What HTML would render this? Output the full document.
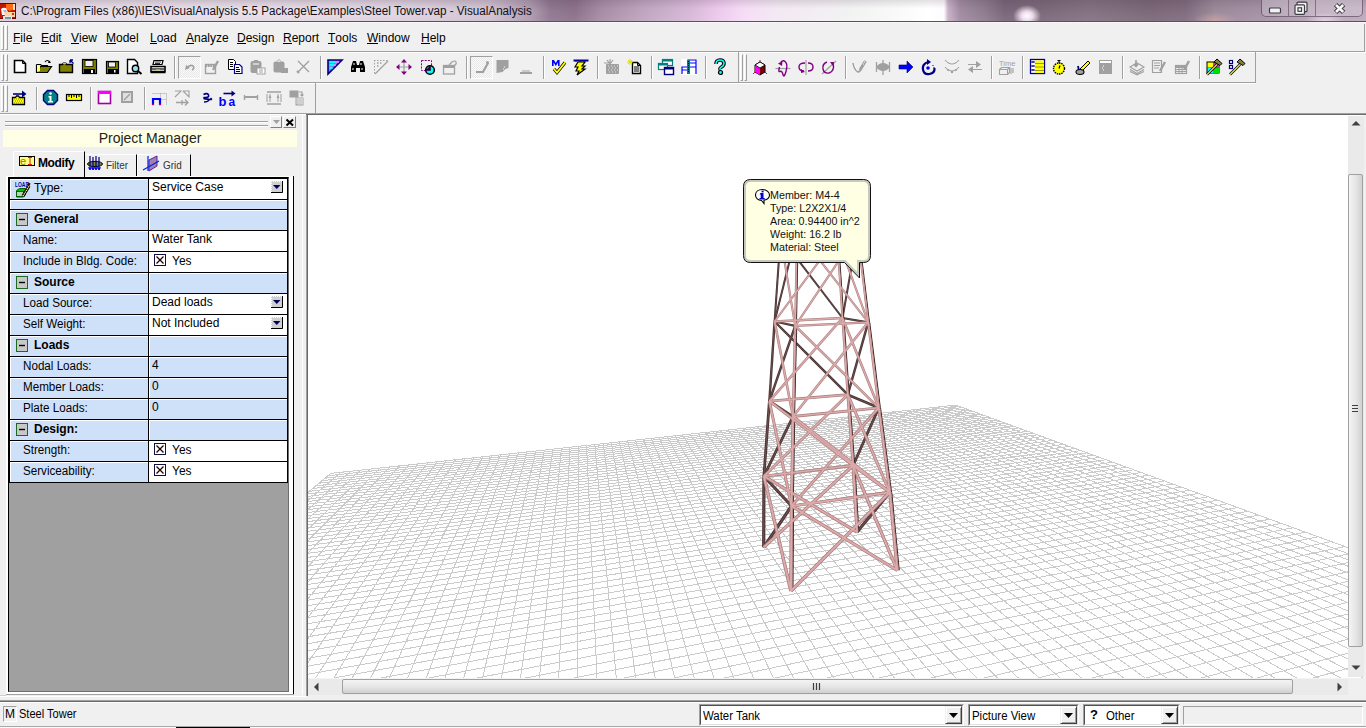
<!DOCTYPE html><html><head><meta charset="utf-8"><style>
*{margin:0;padding:0;box-sizing:border-box}
html,body{width:1366px;height:728px;overflow:hidden;background:#f0f0f0;font-family:"Liberation Sans",sans-serif;font-size:12px;color:#000;position:relative}
.a{position:absolute}
.t{white-space:nowrap;line-height:14px}
.menu u{text-decoration:none;position:relative}
.menu u:after{content:"";position:absolute;left:0;right:0;bottom:1px;height:1px;background:#000}
svg{position:absolute;overflow:visible}
</style></head><body>
<div class="a" style="left:0;top:0;width:1366px;height:21px;overflow:hidden;background:linear-gradient(90deg,#dccfdc 0px,#e2d8e2 100px,#ded2de 250px,#d8cad8 400px,#ccbccc 490px,#ac98ac 530px,#8e7690 550px,#8a7088 575px,#a48aa4 600px,#bca2bc 640px,#d6b8d6 690px,#eccaec 720px,#f6dcf6 745px,#f2e8f2 775px,#f2f2f2 850px,#ffffff 930px,#fdfbfd 944px,#c8b0c8 948px,#a08aa0 960px,#8c7a8c 985px,#786478 1005px,#7a6878 1045px,#827080 1090px,#7a6676 1150px,#7e6a7c 1185px,#9a8898 1215px,#a490a4 1262px,#b4a0b4 1310px,#bca8bc 1366px)">
<div class="a" style="left:0;top:0;width:1366px;height:21px;background:linear-gradient(180deg,rgba(60,40,60,.14) 0,rgba(255,255,255,0) 40%,rgba(255,255,255,.08) 100%)"></div>
<div class="a" style="left:0;top:0;width:560px;height:21px;background:radial-gradient(ellipse 290px 13px at 276px 12px,rgba(255,255,255,.35),rgba(255,255,255,0))"></div>
<div class="a" style="left:1010px;top:2px;width:34px;height:22px;background:radial-gradient(ellipse 14px 11px at 17px 14px,rgba(255,255,255,1) 0,rgba(255,240,255,.85) 40%,rgba(255,255,255,0) 100%)"></div>
<div class="a" style="left:1190px;top:8px;width:50px;height:14px;background:radial-gradient(ellipse 22px 8px at 25px 12px,rgba(220,170,170,.55),rgba(255,255,255,0))"></div>
<div class="a" style="left:1300px;top:8px;width:50px;height:14px;background:radial-gradient(ellipse 20px 9px at 25px 13px,rgba(255,240,255,.6),rgba(255,255,255,0))"></div>
</div>
<svg style="left:0px;top:3px" width="16" height="16"><rect width="16" height="16" fill="#7a0000"/><rect x="0" y="1" width="15" height="14" fill="#c01800"/><path d="M6 1h7l1 5-4 2-4-2z" fill="#ff6a10"/><path d="M13 1h2v6h-2z" fill="#ffe0d0"/><path d="M1 6q2-2 5-1l2 4-2 3H2z" fill="#f8f8ff"/><path d="M3 7h3l1 2H4z" fill="#a0b8e0"/><path d="M4 9h11v5H5z" fill="#ffd4a8"/><path d="M3 13h9v3H3z" fill="#e8e8e8"/><path d="M5 14h6v2H5z" fill="#8090a0"/><path d="M12 10h2v2h-2z" fill="#c04000"/></svg>
<div class="a t" style="left:21px;top:4px;font-size:12.5px;transform:scaleX(0.933);transform-origin:0 0;color:#101018">C:\Program Files (x86)\IES\VisualAnalysis 5.5 Package\Examples\Steel Tower.vap - VisualAnalysis</div>
<div class="a" style="left:1261px;top:-2px;width:102px;height:19px;border:1px solid rgba(70,50,70,.6);border-top:none;border-radius:0 0 5px 5px;background:linear-gradient(180deg,rgba(255,255,255,.28),rgba(255,255,255,.18))"></div>
<div class="a" style="left:1288px;top:0;width:1px;height:16px;background:rgba(70,50,70,.5)"></div>
<div class="a" style="left:1315px;top:0;width:1px;height:16px;background:rgba(70,50,70,.5)"></div>
<svg style="left:1268px;top:7px" width="14" height="7"><rect x="1.5" y="1" width="11" height="5" rx="1" fill="#f2f2f2" stroke="#3c3c44" stroke-width="1.2"/></svg>
<svg style="left:1294px;top:1px" width="15" height="14"><rect x="3" y="1.2" width="10" height="9.5" rx="1" fill="#f0f0f0" stroke="#3c3c44" stroke-width="1.2"/><rect x="1" y="3.8" width="9.5" height="9.5" rx="1" fill="#f4f4f4" stroke="#3c3c44" stroke-width="1.2"/><rect x="4" y="6.8" width="3.5" height="3.5" fill="#fff" stroke="#3c3c44" stroke-width="1.2"/></svg>
<svg style="left:1333px;top:3px" width="14" height="11"><path d="M2.6 1.6L10.6 9.4M10.6 1.6L2.6 9.4" stroke="#3c3c44" stroke-width="4.8"/><path d="M3 2L10.2 9M10.2 2L3 9" stroke="#f6f6f6" stroke-width="2.6"/></svg>
<div class="a" style="left:0px;top:21px;width:1366px;height:1px;background:#555"></div>
<div class="a" style="left:0px;top:22px;width:1366px;height:1px;background:#f8f8f8"></div>
<div class="a" style="left:1px;top:25px;width:3px;height:25px;border-left:1px solid #fff;border-top:1px solid #fff;border-right:1px solid #a0a0a0;border-bottom:1px solid #a0a0a0"></div>
<div class="a" style="left:5px;top:25px;width:3px;height:25px;border-left:1px solid #fff;border-top:1px solid #fff;border-right:1px solid #a0a0a0;border-bottom:1px solid #a0a0a0"></div>
<div class="a t menu" style="left:13px;top:31px"><u>F</u>ile</div>
<div class="a t menu" style="left:41px;top:31px"><u>E</u>dit</div>
<div class="a t menu" style="left:71px;top:31px"><u>V</u>iew</div>
<div class="a t menu" style="left:106px;top:31px"><u>M</u>odel</div>
<div class="a t menu" style="left:150px;top:31px"><u>L</u>oad</div>
<div class="a t menu" style="left:186px;top:31px"><u>A</u>nalyze</div>
<div class="a t menu" style="left:237px;top:31px"><u>D</u>esign</div>
<div class="a t menu" style="left:283px;top:31px"><u>R</u>eport</div>
<div class="a t menu" style="left:328px;top:31px"><u>T</u>ools</div>
<div class="a t menu" style="left:367px;top:31px"><u>W</u>indow</div>
<div class="a t menu" style="left:421px;top:31px"><u>H</u>elp</div>
<div class="a" style="left:0px;top:51px;width:1365px;height:1px;background:#a0a0a0"></div>
<div class="a" style="left:1364px;top:24px;width:1px;height:28px;background:#a0a0a0"></div>
<div class="a" style="left:0px;top:52px;width:1366px;height:1px;background:#fff"></div>
<div class="a" style="left:0px;top:82px;width:1256px;height:1px;background:#a0a0a0"></div>
<div class="a" style="left:0px;top:83px;width:1256px;height:1px;background:#fff"></div>
<div class="a" style="left:1255px;top:52px;width:1px;height:31px;background:#a0a0a0"></div>
<div class="a" style="left:738px;top:52px;width:1px;height:31px;background:#a0a0a0"></div>
<div class="a" style="left:315px;top:83px;width:1px;height:31px;background:#a0a0a0"></div>
<div class="a" style="left:0px;top:113px;width:1366px;height:1px;background:#a0a0a0"></div>
<div class="a" style="left:0px;top:114px;width:1366px;height:1px;background:#fff"></div>
<div class="a" style="left:1px;top:54px;width:3px;height:27px;border-left:1px solid #fff;border-top:1px solid #fff;border-right:1px solid #a0a0a0;border-bottom:1px solid #a0a0a0"></div>
<div class="a" style="left:5px;top:54px;width:3px;height:27px;border-left:1px solid #fff;border-top:1px solid #fff;border-right:1px solid #a0a0a0;border-bottom:1px solid #a0a0a0"></div>
<div class="a" style="left:740px;top:54px;width:3px;height:27px;border-left:1px solid #fff;border-top:1px solid #fff;border-right:1px solid #a0a0a0;border-bottom:1px solid #a0a0a0"></div>
<div class="a" style="left:744px;top:54px;width:3px;height:27px;border-left:1px solid #fff;border-top:1px solid #fff;border-right:1px solid #a0a0a0;border-bottom:1px solid #a0a0a0"></div>
<div class="a" style="left:1px;top:85px;width:3px;height:27px;border-left:1px solid #fff;border-top:1px solid #fff;border-right:1px solid #a0a0a0;border-bottom:1px solid #a0a0a0"></div>
<div class="a" style="left:5px;top:85px;width:3px;height:27px;border-left:1px solid #fff;border-top:1px solid #fff;border-right:1px solid #a0a0a0;border-bottom:1px solid #a0a0a0"></div>
<div class="a" style="left:174px;top:56px;width:1px;height:23px;background:#a0a0a0"></div>
<div class="a" style="left:175px;top:56px;width:1px;height:23px;background:#fff"></div>
<div class="a" style="left:320px;top:56px;width:1px;height:23px;background:#a0a0a0"></div>
<div class="a" style="left:321px;top:56px;width:1px;height:23px;background:#fff"></div>
<div class="a" style="left:466px;top:56px;width:1px;height:23px;background:#a0a0a0"></div>
<div class="a" style="left:467px;top:56px;width:1px;height:23px;background:#fff"></div>
<div class="a" style="left:543px;top:56px;width:1px;height:23px;background:#a0a0a0"></div>
<div class="a" style="left:544px;top:56px;width:1px;height:23px;background:#fff"></div>
<div class="a" style="left:597px;top:56px;width:1px;height:23px;background:#a0a0a0"></div>
<div class="a" style="left:598px;top:56px;width:1px;height:23px;background:#fff"></div>
<div class="a" style="left:651px;top:56px;width:1px;height:23px;background:#a0a0a0"></div>
<div class="a" style="left:652px;top:56px;width:1px;height:23px;background:#fff"></div>
<div class="a" style="left:705px;top:56px;width:1px;height:23px;background:#a0a0a0"></div>
<div class="a" style="left:706px;top:56px;width:1px;height:23px;background:#fff"></div>
<div class="a" style="left:845px;top:56px;width:1px;height:23px;background:#a0a0a0"></div>
<div class="a" style="left:846px;top:56px;width:1px;height:23px;background:#fff"></div>
<div class="a" style="left:991px;top:56px;width:1px;height:23px;background:#a0a0a0"></div>
<div class="a" style="left:992px;top:56px;width:1px;height:23px;background:#fff"></div>
<div class="a" style="left:1022px;top:56px;width:1px;height:23px;background:#a0a0a0"></div>
<div class="a" style="left:1023px;top:56px;width:1px;height:23px;background:#fff"></div>
<div class="a" style="left:1122px;top:56px;width:1px;height:23px;background:#a0a0a0"></div>
<div class="a" style="left:1123px;top:56px;width:1px;height:23px;background:#fff"></div>
<div class="a" style="left:1199px;top:56px;width:1px;height:23px;background:#a0a0a0"></div>
<div class="a" style="left:1200px;top:56px;width:1px;height:23px;background:#fff"></div>
<div class="a" style="left:36px;top:87px;width:1px;height:23px;background:#a0a0a0"></div>
<div class="a" style="left:37px;top:87px;width:1px;height:23px;background:#fff"></div>
<div class="a" style="left:90px;top:87px;width:1px;height:23px;background:#a0a0a0"></div>
<div class="a" style="left:91px;top:87px;width:1px;height:23px;background:#fff"></div>
<div class="a" style="left:144px;top:87px;width:1px;height:23px;background:#a0a0a0"></div>
<div class="a" style="left:145px;top:87px;width:1px;height:23px;background:#fff"></div>
<div class="a" style="left:178px;top:56px;width:23px;height:23px;border:1px solid #a0a0a0;border-right-color:#fff;border-bottom-color:#fff;background:repeating-conic-gradient(#fafafa 0 25%,#e8e8e8 0 50%) 0 0/2px 2px"></div>
<div class="a" style="left:470px;top:56px;width:23px;height:23px;border:1px solid #a0a0a0;border-right-color:#fff;border-bottom-color:#fff;background:repeating-conic-gradient(#fafafa 0 25%,#e8e8e8 0 50%) 0 0/2px 2px"></div>
<svg style="left:13px;top:59px" width="16" height="16" viewBox="0 0 16 16"><path d="M1.5 1.5h8l3 3v9h-11z" fill="#fff" stroke="#000" stroke-width="1.6"/><path d="M9.5 1.5v3h3" fill="none" stroke="#000"/></svg>
<svg style="left:36px;top:59px" width="16" height="16" viewBox="0 0 16 16"><path d="M0.5 5.5h4l1 1h6v2" fill="#ffff80" stroke="#000" stroke-width="1.2"/><path d="M0.5 5.5v8h11l4-6h-11l-4 6" fill="#808000" stroke="#000" stroke-width="1.2"/><path d="M1 6h3v6l-3 1z" fill="#ffff80"/><path d="M9 3q2-3 5 0" fill="none" stroke="#000" stroke-width="1.2"/><path d="M13 1.5l2 2.5h-3z" fill="#000"/></svg>
<svg style="left:59px;top:59px" width="16" height="16" viewBox="0 0 16 16"><path d="M0.5 5.5h3l1-1.5h2l1 1.5h6v8h-13z" fill="#808000" stroke="#000" stroke-width="1.4"/><path d="M4 4.2h3" stroke="#fff"/><path d="M14.5 4.5L11 1M11 1h3M11 1v3" stroke="#000080" stroke-width="1.3" fill="none"/></svg>
<svg style="left:82px;top:59px" width="16" height="16" viewBox="0 0 16 16"><rect x="0.5" y="0.5" width="14" height="14" fill="#808000" stroke="#000" stroke-width="1.2"/><rect x="3" y="1.5" width="8" height="6" fill="#f0f0f0" stroke="#000" stroke-width="0.8"/><rect x="2" y="10" width="11" height="5" fill="#000"/><rect x="9" y="11" width="2" height="3" fill="#fff"/></svg>
<svg style="left:105px;top:59px" width="16" height="16" viewBox="0 0 16 16"><rect x="1.5" y="2.5" width="12" height="12" fill="#808000" stroke="#000" stroke-width="1.2"/><rect x="3.5" y="3" width="7" height="5" fill="#f0f0f0" stroke="#000" stroke-width="0.8"/><rect x="3" y="10" width="10" height="4.5" fill="#000"/><rect x="9" y="11" width="1.5" height="2.5" fill="#fff"/></svg>
<svg style="left:127px;top:59px" width="16" height="16" viewBox="0 0 16 16"><path d="M0.5 0.5h7l3 3v11h-10z" fill="#fff" stroke="#000" stroke-width="1.4"/><circle cx="8.5" cy="9.5" r="3.2" fill="#a0e0e8" stroke="#000" stroke-width="1.4"/><path d="M11 12l3.5 3" stroke="#000" stroke-width="2"/></svg>
<svg style="left:150px;top:59px" width="16" height="16" viewBox="0 0 16 16"><path d="M4 1.5h9l-1 4h-9z" fill="#fff" stroke="#000" stroke-width="1.2"/><path d="M5 3h6M5 4.5h5" stroke="#000" stroke-width=".8"/><path d="M1 7.5h14v5h-14z" fill="#fff" stroke="#000" stroke-width="1.6"/><path d="M2 10h12" stroke="#000" stroke-width="1.2"/><path d="M6 11h4" stroke="#e0e040" stroke-width="1"/><path d="M0.5 13.5h15" stroke="#000" stroke-width="1.5"/></svg>
<svg style="left:182px;top:59px" width="16" height="16" viewBox="0 0 16 16"><path d="M5 9q3-4 6-2q2 2-1 4" fill="none" stroke="#a0a0a0" stroke-width="1.6"/><path d="M3 11l1-5 4 3z" fill="#a0a0a0"/></svg>
<svg style="left:204px;top:59px" width="16" height="16" viewBox="0 0 16 16"><rect x="1.5" y="5.5" width="10" height="9" fill="none" stroke="#a0a0a0" stroke-width="1.4"/><path d="M1 6h11v2h-11z" fill="#a0a0a0"/><path d="M3 7h1M5.5 7h1M8 7h1" stroke="#fff"/><path d="M9 11l5-9" stroke="#a0a0a0" stroke-width="2.4"/></svg>
<svg style="left:228px;top:59px" width="16" height="16" viewBox="0 0 16 16"><path d="M0.5 0.5h5l2 2v8h-7z" fill="#fff" stroke="#000" stroke-width="1"/><path d="M2 3.5h3M2 5.5h3M2 7.5h3" stroke="#000"/><path d="M6.5 5.5h5l2.5 2.5v6.5h-7.5z" fill="#fff" stroke="#000080" stroke-width="1.2"/><path d="M8 8.5h3M8 10.5h4M8 12.5h4" stroke="#000"/></svg>
<svg style="left:250px;top:59px" width="16" height="16" viewBox="0 0 16 16"><rect x="0.5" y="2" width="11" height="12" rx="2" fill="#a0a0a0"/><rect x="4" y="1" width="4" height="2" fill="#a0a0a0"/><path d="M3 5h6" stroke="#fff"/><rect x="7" y="9" width="8" height="6" fill="#fff" stroke="#a0a0a0"/><path d="M9 11h4M9 13h4" stroke="#a0a0a0"/></svg>
<svg style="left:273px;top:59px" width="16" height="16" viewBox="0 0 16 16"><rect x="0.5" y="2.5" width="11" height="11" rx="2" fill="#a0a0a0"/><path d="M4 2.5l2-2 2 2" fill="#fff" stroke="#a0a0a0"/><rect x="8" y="9" width="7" height="5" fill="#a0a0a0"/></svg>
<svg style="left:296px;top:59px" width="16" height="16" viewBox="0 0 16 16"><path d="M2 2l11 11M13 2L2 13" stroke="#a0a0a0" stroke-width="1.4"/><path d="M1 12l2 2" stroke="#a0a0a0" stroke-width="2.2"/></svg>
<svg style="left:327px;top:59px" width="16" height="16" viewBox="0 0 16 16"><path d="M1 1h14L1 15z" fill="#8080ff" stroke="#000080" stroke-width="1.6"/><path d="M2.5 3h6M2.5 6h5M2.5 9h3" stroke="#00ffff" stroke-width="1.8"/><path d="M8 3h4M7 6h2" stroke="#ff80ff" stroke-width="1.5"/></svg>
<svg style="left:350px;top:59px" width="16" height="16" viewBox="0 0 16 16"><path d="M1 13V8l2-6h3l1 4h2l1-4h3l2 6v5h-5v-4h-4v4z" fill="#000"/><path d="M3 9v2M12 9v2M4 4v2M11 4v2" stroke="#fff" stroke-width="1"/></svg>
<svg style="left:373px;top:59px" width="16" height="16" viewBox="0 0 16 16"><path d="M1 1.5h14M1.5 1v14" stroke="#a0a0a0" stroke-dasharray="1.5 1.5" stroke-width="1"/><path d="M2 15L15 2" stroke="#a0a0a0" stroke-width="1.3"/><path d="M4 4h1.5M7 4h1.5M4 7h1.5" stroke="#a0a0a0" stroke-width="1.5"/></svg>
<svg style="left:396px;top:59px" width="16" height="16" viewBox="0 0 16 16"><path d="M8 2v12M2 8h12" stroke="#a0a0a0" stroke-width="1.2"/><path d="M8 0l3 3.5h-6zM8 16l3-3.5h-6zM0 8l3.5 3v-6zM16 8l-3.5 3v-6z" fill="#800080"/></svg>
<svg style="left:420px;top:59px" width="16" height="16" viewBox="0 0 16 16"><rect x="1.5" y="1.5" width="10" height="10" fill="none" stroke="#800080" stroke-dasharray="2 1.2"/><circle cx="10" cy="11" r="4.3" fill="#00ffff" stroke="#000" stroke-width="1.6"/><path d="M10 6.8v4.2h-4" fill="#300030" stroke="#300030" stroke-width="1.6"/></svg>
<svg style="left:442px;top:59px" width="16" height="16" viewBox="0 0 16 16"><rect x="1.5" y="6.5" width="11" height="8.5" fill="none" stroke="#a0a0a0" stroke-width="1.3"/><path d="M1 6h12v3h-12z" fill="#a0a0a0"/><path d="M7 6l3-3q3-2 4 0t-2 4" fill="none" stroke="#a0a0a0" stroke-width="1.2"/></svg>
<svg style="left:474px;top:59px" width="16" height="16" viewBox="0 0 16 16"><path d="M2 13h7l5-9" fill="none" stroke="#a0a0a0" stroke-width="2.2"/><circle cx="13.5" cy="3.5" r="1.5" fill="#a0a0a0"/></svg>
<svg style="left:496px;top:59px" width="16" height="16" viewBox="0 0 16 16"><path d="M0.5 1h12v8l-3 1-3 3-6 1z" fill="#a0a0a0"/><path d="M8 8h1M7 10h1" stroke="#fff"/></svg>
<svg style="left:519px;top:59px" width="16" height="16" viewBox="0 0 16 16"><path d="M1 13h12v2h-12z" fill="#a0a0a0"/><path d="M3 12h8" stroke="#a0a0a0"/></svg>
<svg style="left:551px;top:59px" width="16" height="16" viewBox="0 0 16 16"><path d="M1 1h2l1.8 3 1.8-3h2v6h-1.6v-3.5l-2.2 3.5-2.2-3.5v3.5h-1.6z" fill="#0000ff"/><path d="M3 10l3 3.5 8-10" fill="none" stroke="#000" stroke-width="3.2"/><path d="M3 10l3 3.5 8-10" fill="none" stroke="#ffff00" stroke-width="1.8"/></svg>
<svg style="left:573px;top:59px" width="16" height="16" viewBox="0 0 16 16"><path d="M0.5 1.5h15" stroke="#000080" stroke-width="2"/><path d="M2 2h2M6 2h2M10 2h2" stroke="#0000ff" stroke-width="1.2"/><path d="M5 3l-3 5h3l-2 4h3l-2 4 8-6h-3l3-3h-3l3-4z" fill="#ffff00" stroke="#000" stroke-width="1.2"/></svg>
<svg style="left:604px;top:59px" width="16" height="16" viewBox="0 0 16 16"><rect x="2" y="5" width="13" height="10" rx="1" fill="#a0a0a0"/><path d="M3 1l3 4M6 0v5M9 1l-3 4M0 4h6" stroke="#a0a0a0" stroke-width="1.2"/><path d="M4 7h1M7 7h1M10 7h1M13 7h1M5 9h1M8 9h1M11 9h1M4 11h1M7 11h1M10 11h1M13 11h1M5 13h1M8 13h1M11 13h1" stroke="#e0e0e0"/></svg>
<svg style="left:627px;top:59px" width="16" height="16" viewBox="0 0 16 16"><path d="M5.5 3.5h5l3 3v8h-8z" fill="#fff" stroke="#000" stroke-width="1.4"/><path d="M10.5 3.5v3h3" fill="none" stroke="#000"/><path d="M7 8h5M7 10h5M7 12h5" stroke="#000" stroke-width="1"/><path d="M0 3h6M3 0v6M1 1l4 4M5 1l-4 4" stroke="#e0e000" stroke-width="1"/></svg>
<svg style="left:658px;top:59px" width="16" height="16" viewBox="0 0 16 16"><rect x="4.5" y="0.5" width="10" height="6" fill="#fff" stroke="#008080" stroke-width="1.2"/><rect x="4" y="0" width="11" height="2.5" fill="#008080"/><rect x="0.5" y="4.5" width="9" height="6" fill="#fff" stroke="#008080" stroke-width="1.2"/><rect x="0" y="4" width="10" height="2.5" fill="#008080"/><rect x="6.5" y="8.5" width="9" height="7" fill="#fff" stroke="#000080" stroke-width="1.4"/><rect x="6" y="8" width="10" height="2.5" fill="#000080"/></svg>
<svg style="left:681px;top:59px" width="16" height="16" viewBox="0 0 16 16"><rect x="0" y="0" width="16" height="16" fill="#fff"/><path d="M1 15V8h6M1 11h6M7 15V1h8v14M7 4h8M7 8h8" fill="none" stroke="#0000ff" stroke-width="1.2"/><rect x="6" y="1" width="3" height="14" fill="#008080"/><path d="M7.5 2v12" stroke="#000" stroke-dasharray="1 1"/></svg>
<svg style="left:712px;top:59px" width="16" height="16" viewBox="0 0 16 16"><path d="M4 5q0-4 4-4t4 3.5q0 2-2.5 3.5t-1 3" fill="none" stroke="#000" stroke-width="3.6"/><path d="M4 5q0-4 4-4t4 3.5q0 2-2.5 3.5t-1 3" fill="none" stroke="#00ffff" stroke-width="1.6"/><circle cx="8.5" cy="13.5" r="2" fill="#00ffff" stroke="#000" stroke-width="1.2"/></svg>
<svg style="left:752px;top:59px" width="16" height="16" viewBox="0 0 16 16"><path d="M8 1v3M1 15l3-3M15 15l-3-3" stroke="#c02020" stroke-width="1"/><path d="M3 6l5-3 5 3v7l-5 3-5-3z" fill="#800000" stroke="#000" stroke-width="1"/><path d="M3 6l5 3v7l-5-3z" fill="#ff00ff"/><path d="M3 6l5-3 5 3-5 3z" fill="#fff" stroke="#000" stroke-width=".8"/></svg>
<svg style="left:775px;top:59px" width="16" height="16" viewBox="0 0 16 16"><path d="M0.5 9.5h15" stroke="#a0a0a0" stroke-width="1.2"/><path d="M6 3.2Q8 0.5 10.5 3T11 12.5 8 15.5 5 12.5 4.5 8" fill="none" stroke="#800080" stroke-width="1.4"/><path d="M3 4.5l4.5-2.5-0.5 5z" fill="#800080"/></svg>
<svg style="left:798px;top:59px" width="16" height="16" viewBox="0 0 16 16"><path d="M8 1v15" stroke="#a0a0a0" stroke-width="1.2"/><path d="M7 4q-6 0-6 4t5 4M10 4q5 0 5 4t-5 4" fill="none" stroke="#800080" stroke-width="1.4"/><path d="M3 10l4 3-4 1z" fill="#800080"/></svg>
<svg style="left:821px;top:59px" width="16" height="16" viewBox="0 0 16 16"><path d="M1 15L15 2" stroke="#a0a0a0" stroke-width="1.2"/><path d="M6 3q-5 2-4 7t6 4q6-2 4-10" fill="none" stroke="#800080" stroke-width="1.4"/><path d="M9 3l4 0-1 4z" fill="#800080"/></svg>
<svg style="left:852px;top:59px" width="16" height="16" viewBox="0 0 16 16"><path d="M1 4q1 7 5 9q2 0 3-3" fill="none" stroke="#a0a0a0" stroke-width="1.5"/><path d="M8 11l5.5-9" stroke="#a0a0a0" stroke-width="3"/><path d="M3 7h1M4.5 10h1M11 5h1M12 3h1" stroke="#fff"/></svg>
<svg style="left:875px;top:59px" width="16" height="16" viewBox="0 0 16 16"><path d="M1.5 3v10M14.5 3v10M8 1v15" stroke="#a0a0a0" stroke-width="1.3"/><path d="M1 8q3-4 7-4t7 4q-3 4-7 4t-7-4z" fill="#a0a0a0"/></svg>
<svg style="left:898px;top:59px" width="16" height="16" viewBox="0 0 16 16"><path d="M1 6h8V2l6 6-6 6v-4H1z" fill="#0000ff" stroke="#000080" stroke-width=".6"/></svg>
<svg style="left:921px;top:59px" width="16" height="16" viewBox="0 0 16 16"><path d="M7 3q-6 2-5 7.5t6.5 4.5 5-6" fill="none" stroke="#000080" stroke-width="2.2"/><path d="M6 0l4 3-4 3z" fill="#000080"/><circle cx="7" cy="9" r="1.8" fill="#0000ff"/><path d="M12 6v1M13 8v1" stroke="#000080"/></svg>
<svg style="left:944px;top:59px" width="16" height="16" viewBox="0 0 16 16"><path d="M1 1q7 8 14 0M1 8q7 8 14 0" fill="none" stroke="#a0a0a0" stroke-width="1.1"/><circle cx="8" cy="13" r="1.2" fill="#a0a0a0"/><circle cx="4" cy="11" r="1" fill="#a0a0a0"/><circle cx="12" cy="11" r="1" fill="#a0a0a0"/></svg>
<svg style="left:967px;top:59px" width="16" height="16" viewBox="0 0 16 16"><path d="M1 5.5h11M4 10.5h11" stroke="#a0a0a0" stroke-width="1.2"/><path d="M9 2l5 3.5-5 3.5zM6 7l-5 3.5 5 3.5z" fill="#a0a0a0"/></svg>
<svg style="left:998px;top:59px" width="16" height="16" viewBox="0 0 16 16"><text x="1" y="7" font-size="7.5" font-family="Liberation Sans" fill="#a0a0a0">Time</text><path d="M1.5 10.5h8v5h-8zM1.5 10.5l2-2h8l-2 2M9.5 15.5l2-2v-5" fill="none" stroke="#a0a0a0" stroke-width="1.1"/><path d="M13 9v6M15 9v5" stroke="#a0a0a0" stroke-width="1.1"/></svg>
<svg style="left:1030px;top:59px" width="16" height="16" viewBox="0 0 16 16"><rect x="0.5" y="0.5" width="14" height="14" fill="#fff" stroke="#000080" stroke-width="1.3"/><rect x="5" y="1.5" width="8.8" height="12.5" fill="#ffff00"/><path d="M5 4.5h9M5 8h9M5 11.5h9" stroke="#808000" stroke-width=".8"/><path d="M1.5 3h3M1.5 7h3M1.5 11h3" stroke="#000080" stroke-width="2"/><path d="M2.5 3h1M2.5 7h1M2.5 11h1" stroke="#fff" stroke-width="1"/></svg>
<svg style="left:1052px;top:59px" width="16" height="16" viewBox="0 0 16 16"><circle cx="7" cy="9.5" r="5.5" fill="#ffff00" stroke="#000" stroke-width="1.4" stroke-dasharray="1.5 .8"/><path d="M7 1v3M5.5 1.5h3M7 9.5l1-3" stroke="#000" stroke-width="1.2"/></svg>
<svg style="left:1075px;top:59px" width="16" height="16" viewBox="0 0 16 16"><path d="M4 11l9-9 2 2-9 9z" fill="#ffff00" stroke="#000" stroke-width="1"/><path d="M3 7l1 5 5 0" fill="none" stroke="#000080" stroke-width="1.8"/><ellipse cx="5" cy="13" rx="4" ry="2.5" fill="#a0a0a0" stroke="#000" stroke-width="1.1"/></svg>
<svg style="left:1098px;top:59px" width="16" height="16" viewBox="0 0 16 16"><rect x="1" y="1" width="13" height="14" fill="#a0a0a0"/><rect x="2" y="2" width="11" height="2" fill="#fff"/><path d="M5 7h1M4 9h1M5 11h1" stroke="#fff"/></svg>
<svg style="left:1129px;top:59px" width="16" height="16" viewBox="0 0 16 16"><path d="M1 8l7-4 7 4-7 4z" fill="#f0f0f0" stroke="#a0a0a0" stroke-width="1.1"/><path d="M1 10.5l7 4 7-4M1 12.5l7 3.5 7-3.5" fill="none" stroke="#a0a0a0" stroke-width="1.1"/><path d="M7 1v6M5 5l2 2.5 2-2.5" fill="none" stroke="#a0a0a0" stroke-width="1.6"/></svg>
<svg style="left:1152px;top:59px" width="16" height="16" viewBox="0 0 16 16"><path d="M0.5 1.5h9v12h-9z" fill="#f0f0f0" stroke="#a0a0a0" stroke-width="1.2"/><path d="M2 4h6M2 6.5h6M2 9h5" stroke="#a0a0a0"/><path d="M8 12l5-9" stroke="#a0a0a0" stroke-width="2.4"/></svg>
<svg style="left:1175px;top:59px" width="16" height="16" viewBox="0 0 16 16"><rect x="0.5" y="6.5" width="11" height="8" fill="#f0f0f0" stroke="#a0a0a0" stroke-width="1.2"/><path d="M0.5 6.5h11v2h-11zM1 10.5h10M1 12.5h10M4 8.5v6M7 8.5v6" fill="#a0a0a0" stroke="#a0a0a0" stroke-width="1"/><path d="M9 11l5-9" stroke="#a0a0a0" stroke-width="2.4"/></svg>
<svg style="left:1206px;top:59px" width="16" height="16" viewBox="0 0 16 16"><rect x="0.5" y="2.5" width="13" height="12" fill="#000"/><rect x="1.5" y="3.5" width="5.5" height="5" fill="#ffff00"/><rect x="7" y="3.5" width="6" height="5" fill="#c040c0"/><rect x="1.5" y="8.5" width="5.5" height="5.5" fill="#00ffff"/><rect x="7" y="8.5" width="6" height="5.5" fill="#00e000"/><path d="M1 15.5l10-10" stroke="#000" stroke-width="2.6"/><path d="M1 15.5l10-10" stroke="#e0e060" stroke-width="1.2"/><path d="M8 3l3-3 5 4.5-2 2z" fill="#808040" stroke="#000" stroke-width="1"/></svg>
<svg style="left:1229px;top:59px" width="16" height="16" viewBox="0 0 16 16"><rect x="0.5" y="1.5" width="3" height="3" fill="#fff" stroke="#000080" stroke-width="1.2"/><rect x="0.5" y="6.5" width="3" height="3" fill="#fff" stroke="#000080" stroke-width="1.2"/><path d="M1 15.5l10-10" stroke="#000" stroke-width="2.6"/><path d="M1 15.5l10-10" stroke="#e0e060" stroke-width="1.2"/><path d="M8 3l3-3 5 4.5-2 2z" fill="#808040" stroke="#000" stroke-width="1"/></svg>
<svg style="left:12px;top:90px" width="16" height="16" viewBox="0 0 16 16"><path d="M0.5 7.5h3l1-1.5h2l1 1.5h5v7h-12z" fill="#ffff00" stroke="#000" stroke-width="1.3"/><path d="M2 9h1M4 9h1M6 9h1M8 9h1M10 9h1M3 11h1M5 11h1M7 11h1M9 11h1M2 13h1M4 13h1M6 13h1M8 13h1M10 13h1" stroke="#808000"/><path d="M1 4h10" stroke="#000080" stroke-width="1.6"/><path d="M10 0.5l4.5 3.5-4.5 3.5z" fill="#000080"/></svg>
<svg style="left:43px;top:90px" width="16" height="16" viewBox="0 0 16 16"><path d="M4.5 0.5h6l4 4v6l-4 4h-6l-4-4v-6z" fill="#008080" stroke="#000080" stroke-width="1.4"/><circle cx="7.5" cy="3.5" r="1.3" fill="#fff"/><path d="M5.5 6h3v5h1.5v1.5h-5v-1.5h1.5v-3.5h-1z" fill="#fff"/></svg>
<svg style="left:66px;top:90px" width="16" height="16" viewBox="0 0 16 16"><rect x="0.5" y="4.5" width="15" height="6" fill="#ffff00" stroke="#000" stroke-width="1.2"/><path d="M3 5v2M5.5 5v3M8 5v2M10.5 5v3M13 5v2" stroke="#000" stroke-width="1"/></svg>
<svg style="left:97px;top:90px" width="16" height="16" viewBox="0 0 16 16"><rect x="1.5" y="1.5" width="12" height="12" fill="#fff" stroke="#a000a0" stroke-width="1.6"/><rect x="1" y="1" width="13" height="3" fill="#ff00ff"/></svg>
<svg style="left:120px;top:90px" width="16" height="16" viewBox="0 0 16 16"><rect x="1" y="1" width="12" height="12" fill="#a0a0a0"/><rect x="3" y="3" width="8" height="8" fill="#e0e0e0"/><path d="M4 10l6-6" stroke="#a0a0a0" stroke-width="1.4"/></svg>
<svg style="left:151px;top:90px" width="16" height="16" viewBox="0 0 16 16"><path d="M1.5 3.5h14M9.5 3.5v5M15.5 3.5v12M9.5 9.5h6" stroke="#a0a0a0" stroke-dasharray="1 1" stroke-width="1" fill="none"/><path d="M2 15V9h7v6" fill="none" stroke="#0000ff" stroke-width="2.2"/><path d="M1 14.5h2M8 14.5h2" stroke="#c00060" stroke-width="1.4"/></svg>
<svg style="left:174px;top:90px" width="16" height="16" viewBox="0 0 16 16"><path d="M1 1h6l-6 6M9 1h6v6l-6-6" fill="none" stroke="#a0a0a0" stroke-width="1.1"/><path d="M8 10v5M2 12.5h12M11 9.5l3 3-3 3" fill="none" stroke="#a0a0a0" stroke-width="1.3"/></svg>
<svg style="left:199px;top:90px" width="16" height="16" viewBox="0 0 16 16"><path d="M4.5 4.5q4-2 5 0.5t-3 2.5 2 1.5 3-1M4.5 8.5q3 1 5 0.5M5 12q4 0 5-2" fill="none" stroke="#000080" stroke-width="1.6"/></svg>
<svg style="left:220px;top:90px" width="16" height="16" viewBox="0 0 16 16"><path d="M3.5 3.5h9" stroke="#000080" stroke-width="1.6"/><path d="M11.5 0.5l4 3-4 3z" fill="#000080"/><text x="-1.5" y="15.5" font-size="13" font-weight="bold" font-family="Liberation Sans" fill="#0000ff">b</text><text x="8.5" y="15.5" font-size="12" font-weight="bold" font-family="Liberation Sans" fill="#0000ff">a</text></svg>
<svg style="left:243px;top:90px" width="16" height="16" viewBox="0 0 16 16"><path d="M1 7h14" stroke="#a0a0a0" stroke-width="2"/><path d="M1.5 5v5M14.5 5v5" stroke="#a0a0a0" stroke-width="1.4"/></svg>
<svg style="left:266px;top:90px" width="16" height="16" viewBox="0 0 16 16"><path d="M1 2h14M1 14h14" stroke="#a0a0a0" stroke-width="1.6"/><path d="M1 4v8M15 4v8" stroke="#a0a0a0"/><path d="M4 4v8M12 4v8" stroke="#a0a0a0" stroke-width="1"/><path d="M2.5 8l1.5-3 1.5 3zM10.5 8l1.5-3 1.5 3z" fill="#a0a0a0"/></svg>
<svg style="left:289px;top:90px" width="16" height="16" viewBox="0 0 16 16"><rect x="0.5" y="0.5" width="9" height="7" fill="#a0a0a0"/><rect x="6.5" y="7.5" width="8" height="8" fill="#a0a0a0"/><path d="M7 9h7M7 11h7M7 13h7M9 8v7M11 8v7M13 8v7" stroke="#e0e0e0"/><path d="M10 2h3v3M11.5 4.5l1.5 1.5 1.5-1.5" fill="none" stroke="#a0a0a0" stroke-width="1.2"/></svg>
<div class="a" style="left:5px;top:121px;width:263px;height:1px;background:#a0a0a0"></div>
<div class="a" style="left:5px;top:122px;width:263px;height:1px;background:#fff"></div>
<div class="a" style="left:5px;top:125px;width:263px;height:1px;background:#a0a0a0"></div>
<div class="a" style="left:5px;top:126px;width:263px;height:1px;background:#fff"></div>
<div class="a" style="left:270px;top:116px;width:12px;height:12px;border:1px solid #fff;border-right-color:#808080;border-bottom-color:#808080;background:#f0f0f0"></div>
<svg style="left:273px;top:120px" width="7" height="4"><path d="M0 0h7L3.5 4z" fill="#a0a0a0"/></svg>
<div class="a" style="left:283px;top:116px;width:13px;height:12px;border:1px solid #fff;border-right-color:#808080;border-bottom-color:#808080;background:#f0f0f0"></div>
<svg style="left:286px;top:119px" width="8" height="7"><path d="M0.5 0.5L7 6.5M7 0.5L0.5 6.5" stroke="#000" stroke-width="2"/></svg>
<div class="a" style="left:3px;top:130px;width:294px;height:17px;background:#ffffe6"></div>
<div class="a t" style="left:3px;top:130px;width:294px;text-align:center;font-size:14px;line-height:16px;color:#222">Project Manager</div>
<div class="a" style="left:6px;top:176px;width:287px;height:518px;background:#fff"></div>
<div class="a" style="left:293px;top:176px;width:1px;height:519px;background:#000"></div>
<div class="a" style="left:6px;top:694px;width:288px;height:1px;background:#a0a0a0"></div>
<div class="a" style="left:0px;top:695px;width:6px;height:1px;background:#d0d0d0"></div>
<div class="a" style="left:0px;top:696px;width:306px;height:1px;background:#fff"></div>
<div class="a" style="left:84px;top:154px;width:53px;height:22px;border-left:1px solid #fff;border-top:1px solid #fff;border-right:1px solid #000"></div>
<div class="a" style="left:137px;top:154px;width:54px;height:22px;border-left:1px solid #fff;border-top:1px solid #fff;border-right:1px solid #000"></div>
<div class="a" style="left:13px;top:151px;width:72px;height:26px;border-left:1px solid #fff;border-top:1px solid #fff;border-right:1px solid #000;background:#f0f0f0;border-top-left-radius:2px"></div>
<div class="a t" style="left:38px;top:156px;font-weight:bold;font-size:12px;letter-spacing:-0.4px">Modify</div>
<div class="a t" style="left:106px;top:158px;font-size:11px;color:#333;transform:scaleX(.9);transform-origin:0 0;top:158px">Filter</div>
<div class="a t" style="left:163px;top:158px;font-size:11px;color:#333;transform:scaleX(.9);transform-origin:0 0">Grid</div>
<svg style="left:19px;top:156px" width="17" height="11"><rect x="0.5" y="0.5" width="15" height="9" fill="#ffff80" stroke="#000"/><text x="1" y="8.6" font-size="11" font-family="Liberation Sans" fill="#808000">e</text><path d="M9 1.5h4M11 1.5v7M9 8.5h4" stroke="#e02000" stroke-width="1"/></svg>
<svg style="left:87px;top:156px" width="16" height="15"><ellipse cx="8" cy="8" rx="7.5" ry="2.6" fill="#808040" stroke="#000" stroke-width="1"/><path d="M3 0v13M6 1v13M9 0v13M12 1v13" stroke="#000080" stroke-width="1.2"/><path d="M1.5 11.5l1.5 2.5 1.5-2.5M4.5 11.5l1.5 2.5 1.5-2.5M7.5 11.5l1.5 2.5 1.5-2.5M10.5 11.5l1.5 2.5 1.5-2.5" fill="#0000ff" stroke="#0000ff" stroke-width="1"/></svg>
<svg style="left:143px;top:155px" width="17" height="17"><path d="M6 5l8-4v10l-8 5z" fill="#a080b0" stroke="#6020a0" stroke-width="1"/><path d="M5 1v15M0 15l16-9" stroke="#0020e0" stroke-width="1.2"/></svg>
<div class="a" style="left:8px;top:177px;width:281px;height:515px;background:#a0a0a0;border-left:1px solid #000;border-top:1px solid #000;border-right:1px solid #6e6e6e;border-bottom:1px solid #6e6e6e"></div>
<div class="a" style="left:9px;top:178px;width:279px;height:305px;background:#000"></div>
<div class="a" style="left:10px;top:179px;width:138px;height:20px;background:#cfe1f9;border-top:1px solid #fff;border-left:1px solid #fff"></div>
<div class="a" style="left:149px;top:179px;width:138px;height:20px;background:#fff;border-top:1px solid #fff;border-left:1px solid #fff"></div>
<div class="a t" style="left:34px;top:181px;">Type:</div>
<svg style="left:15px;top:180px" width="16" height="18"><text x="0" y="6.5" font-size="6.8" font-weight="bold" font-family="Liberation Sans" fill="#0000a0" textLength="14" lengthAdjust="spacingAndGlyphs">LOAD</text><path d="M1.5 10.5l3-2h6v6l-2 2.5h-7z" fill="#00c000" stroke="#006000" stroke-width="1"/><rect x="1.5" y="11.5" width="7" height="5" fill="#c0d0c0" stroke="#006000"/><path d="M8 16l6-10" stroke="#000" stroke-width="3.2"/><path d="M8 16l6-10" stroke="#f0f080" stroke-width="1.4" stroke-dasharray="1.2 .8"/><path d="M13 5.5l1.5-2.5" stroke="#400" stroke-width="2.6"/></svg>
<div class="a t" style="left:152px;top:180px;">Service Case</div>
<svg style="left:271px;top:181px" width="12" height="12"><rect x="0" y="0" width="12" height="12" fill="#d0d0d0"/><path d="M11.5 0v11.5H0" fill="none" stroke="#000"/><path d="M0.5 0v11M0 0.5h11" stroke="#fff" stroke-dasharray="1 1"/><path d="M2 4h7.5l-3.75 4z" fill="#000060"/></svg>
<div class="a" style="left:10px;top:200px;width:138px;height:9px;background:#cfe1f9;border-top:1px solid #fff;border-left:1px solid #fff"></div>
<div class="a" style="left:149px;top:200px;width:138px;height:9px;background:#cfe1f9;border-top:1px solid #fff;border-left:1px solid #fff"></div>
<div class="a" style="left:10px;top:210px;width:138px;height:20px;background:#cfe1f9;border-top:1px solid #fff;border-left:1px solid #fff"></div>
<div class="a" style="left:149px;top:210px;width:138px;height:20px;background:#cfe1f9;border-top:1px solid #fff;border-left:1px solid #fff"></div>
<div class="a t" style="left:34px;top:212px;font-weight:bold">General</div>
<svg style="left:16px;top:213px" width="12" height="13"><rect x="0.5" y="0.5" width="11" height="12" fill="#c8c8c8" stroke="#1a6a1a"/><path d="M3 6.5h6" stroke="#000" stroke-width="1.4"/></svg>
<div class="a" style="left:10px;top:231px;width:138px;height:20px;background:#cfe1f9;border-top:1px solid #fff;border-left:1px solid #fff"></div>
<div class="a" style="left:149px;top:231px;width:138px;height:20px;background:#fff;border-top:1px solid #fff;border-left:1px solid #fff"></div>
<div class="a t" style="left:23px;top:233px;transform:scaleX(.97);transform-origin:0 0">Name:</div>
<div class="a t" style="left:152px;top:232px;">Water Tank</div>
<div class="a" style="left:10px;top:252px;width:138px;height:20px;background:#cfe1f9;border-top:1px solid #fff;border-left:1px solid #fff"></div>
<div class="a" style="left:149px;top:252px;width:138px;height:20px;background:#fff;border-top:1px solid #fff;border-left:1px solid #fff"></div>
<div class="a t" style="left:23px;top:254px;transform:scaleX(.97);transform-origin:0 0">Include in Bldg. Code:</div>
<svg style="left:154px;top:254px" width="12" height="13"><rect x="0.5" y="0.5" width="11" height="11" fill="#fff" stroke="#101040"/><path d="M2.5 2.5l7 7M9.5 2.5l-7 7" stroke="#200" stroke-width="1.3"/></svg>
<div class="a t" style="left:172px;top:254px;">Yes</div>
<div class="a" style="left:10px;top:273px;width:138px;height:20px;background:#cfe1f9;border-top:1px solid #fff;border-left:1px solid #fff"></div>
<div class="a" style="left:149px;top:273px;width:138px;height:20px;background:#cfe1f9;border-top:1px solid #fff;border-left:1px solid #fff"></div>
<div class="a t" style="left:34px;top:275px;font-weight:bold">Source</div>
<svg style="left:16px;top:276px" width="12" height="13"><rect x="0.5" y="0.5" width="11" height="12" fill="#c8c8c8" stroke="#1a6a1a"/><path d="M3 6.5h6" stroke="#000" stroke-width="1.4"/></svg>
<div class="a" style="left:10px;top:294px;width:138px;height:20px;background:#cfe1f9;border-top:1px solid #fff;border-left:1px solid #fff"></div>
<div class="a" style="left:149px;top:294px;width:138px;height:20px;background:#fff;border-top:1px solid #fff;border-left:1px solid #fff"></div>
<div class="a t" style="left:23px;top:296px;transform:scaleX(.97);transform-origin:0 0">Load Source:</div>
<div class="a t" style="left:152px;top:295px;">Dead loads</div>
<svg style="left:271px;top:296px" width="12" height="12"><rect x="0" y="0" width="12" height="12" fill="#d0d0d0"/><path d="M11.5 0v11.5H0" fill="none" stroke="#000"/><path d="M0.5 0v11M0 0.5h11" stroke="#fff" stroke-dasharray="1 1"/><path d="M2 4h7.5l-3.75 4z" fill="#000060"/></svg>
<div class="a" style="left:10px;top:315px;width:138px;height:20px;background:#cfe1f9;border-top:1px solid #fff;border-left:1px solid #fff"></div>
<div class="a" style="left:149px;top:315px;width:138px;height:20px;background:#fff;border-top:1px solid #fff;border-left:1px solid #fff"></div>
<div class="a t" style="left:23px;top:317px;transform:scaleX(.97);transform-origin:0 0">Self Weight:</div>
<div class="a t" style="left:152px;top:316px;">Not Included</div>
<svg style="left:271px;top:317px" width="12" height="12"><rect x="0" y="0" width="12" height="12" fill="#d0d0d0"/><path d="M11.5 0v11.5H0" fill="none" stroke="#000"/><path d="M0.5 0v11M0 0.5h11" stroke="#fff" stroke-dasharray="1 1"/><path d="M2 4h7.5l-3.75 4z" fill="#000060"/></svg>
<div class="a" style="left:10px;top:336px;width:138px;height:20px;background:#cfe1f9;border-top:1px solid #fff;border-left:1px solid #fff"></div>
<div class="a" style="left:149px;top:336px;width:138px;height:20px;background:#cfe1f9;border-top:1px solid #fff;border-left:1px solid #fff"></div>
<div class="a t" style="left:34px;top:338px;font-weight:bold">Loads</div>
<svg style="left:16px;top:339px" width="12" height="13"><rect x="0.5" y="0.5" width="11" height="12" fill="#c8c8c8" stroke="#1a6a1a"/><path d="M3 6.5h6" stroke="#000" stroke-width="1.4"/></svg>
<div class="a" style="left:10px;top:357px;width:138px;height:20px;background:#cfe1f9;border-top:1px solid #fff;border-left:1px solid #fff"></div>
<div class="a" style="left:149px;top:357px;width:138px;height:20px;background:#cfe1f9;border-top:1px solid #fff;border-left:1px solid #fff"></div>
<div class="a t" style="left:23px;top:359px;transform:scaleX(.97);transform-origin:0 0">Nodal Loads:</div>
<div class="a t" style="left:152px;top:358px;">4</div>
<div class="a" style="left:10px;top:378px;width:138px;height:20px;background:#cfe1f9;border-top:1px solid #fff;border-left:1px solid #fff"></div>
<div class="a" style="left:149px;top:378px;width:138px;height:20px;background:#cfe1f9;border-top:1px solid #fff;border-left:1px solid #fff"></div>
<div class="a t" style="left:23px;top:380px;transform:scaleX(.97);transform-origin:0 0">Member Loads:</div>
<div class="a t" style="left:152px;top:379px;">0</div>
<div class="a" style="left:10px;top:399px;width:138px;height:20px;background:#cfe1f9;border-top:1px solid #fff;border-left:1px solid #fff"></div>
<div class="a" style="left:149px;top:399px;width:138px;height:20px;background:#cfe1f9;border-top:1px solid #fff;border-left:1px solid #fff"></div>
<div class="a t" style="left:23px;top:401px;transform:scaleX(.97);transform-origin:0 0">Plate Loads:</div>
<div class="a t" style="left:152px;top:400px;">0</div>
<div class="a" style="left:10px;top:420px;width:138px;height:20px;background:#cfe1f9;border-top:1px solid #fff;border-left:1px solid #fff"></div>
<div class="a" style="left:149px;top:420px;width:138px;height:20px;background:#cfe1f9;border-top:1px solid #fff;border-left:1px solid #fff"></div>
<div class="a t" style="left:34px;top:422px;font-weight:bold">Design:</div>
<svg style="left:16px;top:423px" width="12" height="13"><rect x="0.5" y="0.5" width="11" height="12" fill="#c8c8c8" stroke="#1a6a1a"/><path d="M3 6.5h6" stroke="#000" stroke-width="1.4"/></svg>
<div class="a" style="left:10px;top:441px;width:138px;height:20px;background:#cfe1f9;border-top:1px solid #fff;border-left:1px solid #fff"></div>
<div class="a" style="left:149px;top:441px;width:138px;height:20px;background:#fff;border-top:1px solid #fff;border-left:1px solid #fff"></div>
<div class="a t" style="left:23px;top:443px;transform:scaleX(.97);transform-origin:0 0">Strength:</div>
<svg style="left:154px;top:443px" width="12" height="13"><rect x="0.5" y="0.5" width="11" height="11" fill="#fff" stroke="#101040"/><path d="M2.5 2.5l7 7M9.5 2.5l-7 7" stroke="#200" stroke-width="1.3"/></svg>
<div class="a t" style="left:172px;top:443px;">Yes</div>
<div class="a" style="left:10px;top:462px;width:138px;height:20px;background:#cfe1f9;border-top:1px solid #fff;border-left:1px solid #fff"></div>
<div class="a" style="left:149px;top:462px;width:138px;height:20px;background:#fff;border-top:1px solid #fff;border-left:1px solid #fff"></div>
<div class="a t" style="left:23px;top:464px;transform:scaleX(.97);transform-origin:0 0">Serviceability:</div>
<svg style="left:154px;top:464px" width="12" height="13"><rect x="0.5" y="0.5" width="11" height="11" fill="#fff" stroke="#101040"/><path d="M2.5 2.5l7 7M9.5 2.5l-7 7" stroke="#200" stroke-width="1.3"/></svg>
<div class="a t" style="left:172px;top:464px;">Yes</div>
<div class="a" style="left:302px;top:114px;width:1px;height:581px;background:#fff"></div>
<div class="a" style="left:308px;top:115px;width:1056px;height:580px;background:#fff;overflow:hidden">
<svg style="left:0;top:0" width="1056" height="580" viewBox="0 0 1056 580">
<path d="M647.7 290.1L1583.6 630.1M641.6 290.8L1571.4 635.8M635.5 291.4L1559.0 641.6M629.3 292.1L1546.4 647.4M623.1 292.8L1533.4 653.5M616.9 293.5L1520.3 659.6M610.7 294.1L1506.8 665.8M604.4 294.8L1493.1 672.2M598.0 295.5L1479.0 678.8M591.7 296.2L1464.7 685.4M585.3 296.9L1450.1 692.2M578.8 297.6L1435.1 699.2M572.3 298.3L1419.8 706.3M565.8 299.0L1404.2 713.5M559.3 299.8L1388.3 721.0M552.7 300.5L1371.9 728.5M546.0 301.2L1355.2 736.3M539.4 301.9L1338.1 744.3M532.7 302.7L1320.6 752.4M525.9 303.4L1302.7 760.7M519.1 304.1L1284.4 769.3M512.3 304.9L1265.6 778.0M505.4 305.6L1246.3 786.9M498.5 306.4L1226.6 796.1M491.6 307.2L1206.4 805.5M484.6 307.9L1185.6 815.2M477.5 308.7L1164.3 825.1M470.5 309.5L1142.5 835.2M463.3 310.2L1120.1 845.7M456.2 311.0L1097.0 856.4M449.0 311.8L1073.4 867.4M441.7 312.6L1049.0 878.7M434.4 313.4L1024.0 890.3M427.1 314.2L998.3 902.3M419.7 315.0L971.9 914.6M412.3 315.8L944.6 927.2M404.8 316.6L916.6 940.3M397.3 317.5L887.7 953.7M389.7 318.3L857.9 967.6M382.1 319.1L827.2 981.8M374.4 320.0L795.5 996.6M366.7 320.8L762.8 1011.8M359.0 321.6L729.0 1027.5M351.1 322.5L694.1 1043.7M343.3 323.4L658.0 1060.5M335.4 324.2L620.6 1077.9M327.4 325.1L582.0 1095.8M319.4 326.0L542.0 1114.4M311.3 326.8L500.5 1133.7M303.2 327.7L457.5 1153.7M295.1 328.6L412.9 1174.5M286.8 329.5L366.6 1196.0M278.6 330.4L318.4 1218.4M270.2 331.3L268.4 1241.7M261.9 332.3L216.3 1265.9M253.4 333.2L162.0 1291.1M244.9 334.1L105.4 1317.4M236.4 335.0L46.4 1344.9M227.8 336.0L-15.3 1373.5M219.1 336.9L-79.7 1403.5M210.4 337.9L-147.2 1434.9M201.6 338.8L-217.8 1467.7M192.8 339.8L-291.9 1502.2M183.9 340.8L-369.6 1538.3M174.9 341.8L-451.4 1576.3M165.9 342.7L-537.4 1616.3M156.8 343.7L-628.1 1658.5M147.6 344.7L-723.8 1703.0M138.4 345.7L-825.0 1750.0M129.2 346.8L-932.1 1799.8M119.8 347.8L-1045.6 1852.6M110.4 348.8L-1166.2 1908.7M101.0 349.8L-1294.6 1968.4M91.4 350.9L-1431.5 2032.0M81.8 351.9L-1577.9 2100.1M72.2 353.0L-1734.6 2173.0M62.4 354.0L-1902.9 2251.2M52.6 355.1L-2084.1 2335.5M42.8 356.2L-2279.7 2426.4M32.8 357.3L-2491.6 2524.9M22.8 358.4L-2721.8 2632.0M647.7 290.1L22.8 358.4M651.1 291.3L19.9 360.8M654.5 292.6L17.0 363.2M658.1 293.9L14.0 365.7M661.6 295.2L10.9 368.2M665.3 296.5L7.7 370.9M669.0 297.8L4.5 373.5M672.8 299.2L1.2 376.3M676.6 300.6L-2.2 379.1M680.6 302.0L-5.7 382.0M684.6 303.5L-9.3 385.0M688.7 305.0L-13.0 388.0M692.8 306.5L-16.7 391.1M697.1 308.0L-20.6 394.3M701.4 309.6L-24.6 397.6M705.9 311.2L-28.7 401.0M710.4 312.9L-32.9 404.5M715.0 314.6L-37.2 408.1M719.7 316.3L-41.6 411.8M724.5 318.0L-46.2 415.5M729.5 319.8L-50.9 419.4M734.5 321.6L-55.8 423.5M739.6 323.5L-60.8 427.6M744.9 325.4L-65.9 431.9M750.3 327.4L-71.3 436.3M755.8 329.4L-76.8 440.8M761.4 331.4L-82.4 445.5M767.2 333.5L-88.3 450.4M773.1 335.6L-94.4 455.4M779.1 337.8L-100.6 460.6M785.3 340.1L-107.1 466.0M791.6 342.4L-113.8 471.6M798.1 344.7L-120.8 477.3M804.8 347.2L-128.0 483.3M811.6 349.6L-135.5 489.5M818.6 352.2L-143.3 495.9M825.8 354.8L-151.4 502.6M833.2 357.5L-159.8 509.6M840.7 360.2L-168.5 516.8M848.5 363.1L-177.6 524.4M856.5 366.0L-187.1 532.3M864.7 369.0L-197.0 540.5M873.2 372.0L-207.3 549.0M881.9 375.2L-218.1 558.0M890.9 378.4L-229.5 567.3M900.1 381.8L-241.3 577.1M909.6 385.2L-253.7 587.4M919.4 388.8L-266.8 598.2M929.5 392.5L-280.5 609.6M939.9 396.3L-294.9 621.5M950.7 400.2L-310.1 634.1M961.8 404.2L-326.1 647.4M973.3 408.4L-343.0 661.4M985.1 412.7L-361.0 676.3M997.4 417.1L-380.0 692.0M1010.1 421.8L-400.2 708.7M1023.2 426.5L-421.6 726.5M1036.9 431.5L-444.5 745.5M1051.0 436.6L-469.0 765.8M1065.6 441.9L-495.2 787.5M1080.9 447.5L-523.4 810.8M1096.7 453.2L-553.6 835.9M1113.1 459.2L-586.3 863.0M1130.2 465.4L-621.7 892.3M1148.1 471.9L-660.1 924.1M1166.6 478.6L-702.0 958.8M1186.0 485.7L-747.8 996.7M1206.3 493.0L-798.2 1038.5M1227.4 500.7L-853.8 1084.5M1249.5 508.8L-915.5 1135.6M1272.7 517.2L-984.3 1192.7M1297.0 526.0L-1061.7 1256.8M1322.5 535.3L-1149.2 1329.3M1349.4 545.0L-1249.1 1412.0M1377.6 555.3L-1364.0 1507.2M1407.3 566.1L-1497.7 1617.9M1438.7 577.5L-1655.3 1748.5M1471.8 589.5L-1843.7 1904.5M1506.9 602.3L-2072.9 2094.4M1544.1 615.8L-2357.9 2330.5M1583.6 630.1L-2721.8 2632.0" stroke="#cbcbcb" stroke-width="1" fill="none" shape-rendering="crispEdges"/>
<g fill="none"><path d="M455.7 432.3L455.9 361.2" stroke="#4a3434" stroke-width="3.18"/><path d="M455.7 432.3L483.5 391.0" stroke="#4a3434" stroke-width="3.25"/><path d="M549.0 417.0L581.8 377.3" stroke="#4a3434" stroke-width="3.18"/><path d="M455.9 361.2L483.5 391.0" stroke="#4a3434" stroke-width="3.08"/><path d="M455.9 361.2L461.4 286.2" stroke="#4a3434" stroke-width="2.82"/><path d="M455.9 361.2L485.0 301.5" stroke="#4a3434" stroke-width="2.85"/><path d="M545.1 350.5L570.8 292.8" stroke="#4a3434" stroke-width="2.81"/><path d="M461.4 286.2L485.0 301.5" stroke="#4a3434" stroke-width="2.67"/><path d="M570.8 292.8L539.8 279.7" stroke="#4a3434" stroke-width="2.63"/><path d="M461.4 286.2L466.6 206.5" stroke="#4a3434" stroke-width="2.43"/><path d="M461.4 286.2L487.2 210.8" stroke="#4a3434" stroke-width="2.45"/><path d="M539.8 279.7L560.2 207.3" stroke="#4a3434" stroke-width="2.42"/><path d="M539.8 279.7L466.6 206.5" stroke="#4a3434" stroke-width="2.42"/><path d="M466.6 206.5L487.2 210.8" stroke="#4a3434" stroke-width="2.25"/><path d="M560.2 207.3L534.5 203.0" stroke="#4a3434" stroke-width="2.23"/><path d="M466.6 206.5L472.5 122.0" stroke="#4a3434" stroke-width="2.03"/><path d="M466.6 206.5L489.0 116.0" stroke="#4a3434" stroke-width="2.01"/><path d="M534.5 203.0L549.5 118.0" stroke="#4a3434" stroke-width="2.01"/><path d="M534.5 203.0L472.5 122.0" stroke="#4a3434" stroke-width="2.02"/><path d="M472.5 122.0L489.0 116.0" stroke="#4a3434" stroke-width="1.94"/><path d="M549.5 118.0L529.0 122.0" stroke="#4a3434" stroke-width="1.94"/><path d="M455.7 432.3L455.9 361.2" stroke="#6a4e4e" stroke-width="1.18"/><path d="M455.7 432.3L483.5 391.0" stroke="#6a4e4e" stroke-width="1.20"/><path d="M549.0 417.0L581.8 377.3" stroke="#6a4e4e" stroke-width="1.18"/><path d="M455.9 361.2L483.5 391.0" stroke="#6a4e4e" stroke-width="1.14"/><path d="M455.9 361.2L461.4 286.2" stroke="#6a4e4e" stroke-width="1.04"/><path d="M455.9 361.2L485.0 301.5" stroke="#6a4e4e" stroke-width="1.06"/><path d="M545.1 350.5L570.8 292.8" stroke="#6a4e4e" stroke-width="1.04"/><path d="M461.4 286.2L485.0 301.5" stroke="#6a4e4e" stroke-width="0.99"/><path d="M570.8 292.8L539.8 279.7" stroke="#6a4e4e" stroke-width="0.97"/><path d="M461.4 286.2L466.6 206.5" stroke="#6a4e4e" stroke-width="0.90"/><path d="M461.4 286.2L487.2 210.8" stroke="#6a4e4e" stroke-width="0.91"/><path d="M539.8 279.7L560.2 207.3" stroke="#6a4e4e" stroke-width="0.90"/><path d="M539.8 279.7L466.6 206.5" stroke="#6a4e4e" stroke-width="0.90"/><path d="M466.6 206.5L487.2 210.8" stroke="#6a4e4e" stroke-width="0.83"/><path d="M560.2 207.3L534.5 203.0" stroke="#6a4e4e" stroke-width="0.83"/><path d="M466.6 206.5L472.5 122.0" stroke="#6a4e4e" stroke-width="0.75"/><path d="M466.6 206.5L489.0 116.0" stroke="#6a4e4e" stroke-width="0.75"/><path d="M534.5 203.0L549.5 118.0" stroke="#6a4e4e" stroke-width="0.74"/><path d="M534.5 203.0L472.5 122.0" stroke="#6a4e4e" stroke-width="0.75"/><path d="M472.5 122.0L489.0 116.0" stroke="#6a4e4e" stroke-width="0.72"/><path d="M549.5 118.0L529.0 122.0" stroke="#6a4e4e" stroke-width="0.72"/><path d="M484.9 476.0L485.5 391.0" stroke="#2a1a1a" stroke-width="1.1"/><path d="M485.2 391.0L486.7 301.5" stroke="#2a1a1a" stroke-width="1.1"/><path d="M486.5 301.5L488.7 210.8" stroke="#2a1a1a" stroke-width="1.1"/><path d="M488.4 210.8L490.2 116.0" stroke="#2a1a1a" stroke-width="1.1"/><path d="M591.2 455.4L583.7 377.3" stroke="#2a1a1a" stroke-width="1.1"/><path d="M583.5 377.3L572.5 292.8" stroke="#2a1a1a" stroke-width="1.1"/><path d="M572.3 292.8L561.7 207.3" stroke="#2a1a1a" stroke-width="1.1"/><path d="M561.4 207.3L550.7 118.0" stroke="#2a1a1a" stroke-width="1.1"/><path d="M550.8 417.0L546.9 350.5" stroke="#2a1a1a" stroke-width="1.1"/><path d="M546.7 350.5L541.4 279.7" stroke="#2a1a1a" stroke-width="1.1"/><path d="M541.2 279.7L535.9 203.0" stroke="#2a1a1a" stroke-width="1.1"/><path d="M535.7 203.0L530.2 122.0" stroke="#2a1a1a" stroke-width="1.1"/><path d="M482.9 476.0L483.5 391.0" stroke="#a67a7a" stroke-width="3.48"/><path d="M589.3 455.4L581.8 377.3" stroke="#a67a7a" stroke-width="3.40"/><path d="M549.0 417.0L545.1 350.5" stroke="#a67a7a" stroke-width="3.23"/><path d="M482.9 476.0L455.9 361.2" stroke="#a67a7a" stroke-width="3.41"/><path d="M482.9 476.0L581.8 377.3" stroke="#a67a7a" stroke-width="3.45"/><path d="M589.3 455.4L483.5 391.0" stroke="#a67a7a" stroke-width="3.43"/><path d="M589.3 455.4L545.1 350.5" stroke="#a67a7a" stroke-width="3.33"/><path d="M455.7 432.3L545.1 350.5" stroke="#a67a7a" stroke-width="3.27"/><path d="M549.0 417.0L455.9 361.2" stroke="#a67a7a" stroke-width="3.26"/><path d="M483.5 391.0L581.8 377.3" stroke="#a67a7a" stroke-width="3.23"/><path d="M581.8 377.3L545.1 350.5" stroke="#a67a7a" stroke-width="3.13"/><path d="M545.1 350.5L455.9 361.2" stroke="#a67a7a" stroke-width="3.09"/><path d="M483.5 391.0L485.0 301.5" stroke="#a67a7a" stroke-width="3.04"/><path d="M581.8 377.3L570.8 292.8" stroke="#a67a7a" stroke-width="2.98"/><path d="M545.1 350.5L539.8 279.7" stroke="#a67a7a" stroke-width="2.88"/><path d="M483.5 391.0L461.4 286.2" stroke="#a67a7a" stroke-width="3.00"/><path d="M483.5 391.0L570.8 292.8" stroke="#a67a7a" stroke-width="3.01"/><path d="M581.8 377.3L485.0 301.5" stroke="#a67a7a" stroke-width="3.00"/><path d="M581.8 377.3L539.8 279.7" stroke="#a67a7a" stroke-width="2.95"/><path d="M455.9 361.2L539.8 279.7" stroke="#a67a7a" stroke-width="2.90"/><path d="M545.1 350.5L461.4 286.2" stroke="#a67a7a" stroke-width="2.89"/><path d="M485.0 301.5L570.8 292.8" stroke="#a67a7a" stroke-width="2.79"/><path d="M539.8 279.7L461.4 286.2" stroke="#a67a7a" stroke-width="2.71"/><path d="M485.0 301.5L487.2 210.8" stroke="#a67a7a" stroke-width="2.58"/><path d="M570.8 292.8L560.2 207.3" stroke="#a67a7a" stroke-width="2.54"/><path d="M539.8 279.7L534.5 203.0" stroke="#a67a7a" stroke-width="2.50"/><path d="M485.0 301.5L466.6 206.5" stroke="#a67a7a" stroke-width="2.56"/><path d="M485.0 301.5L560.2 207.3" stroke="#a67a7a" stroke-width="2.57"/><path d="M570.8 292.8L487.2 210.8" stroke="#a67a7a" stroke-width="2.55"/><path d="M570.8 292.8L534.5 203.0" stroke="#a67a7a" stroke-width="2.53"/><path d="M461.4 286.2L534.5 203.0" stroke="#a67a7a" stroke-width="2.52"/><path d="M487.2 210.8L560.2 207.3" stroke="#a67a7a" stroke-width="2.33"/><path d="M534.5 203.0L466.6 206.5" stroke="#a67a7a" stroke-width="2.31"/><path d="M487.2 210.8L489.0 116.0" stroke="#a67a7a" stroke-width="2.10"/><path d="M560.2 207.3L549.5 118.0" stroke="#a67a7a" stroke-width="2.10"/><path d="M534.5 203.0L529.0 122.0" stroke="#a67a7a" stroke-width="2.10"/><path d="M487.2 210.8L472.5 122.0" stroke="#a67a7a" stroke-width="2.12"/><path d="M487.2 210.8L549.5 118.0" stroke="#a67a7a" stroke-width="2.11"/><path d="M560.2 207.3L489.0 116.0" stroke="#a67a7a" stroke-width="2.09"/><path d="M560.2 207.3L529.0 122.0" stroke="#a67a7a" stroke-width="2.11"/><path d="M466.6 206.5L529.0 122.0" stroke="#a67a7a" stroke-width="2.10"/><path d="M489.0 116.0L549.5 118.0" stroke="#a67a7a" stroke-width="2.02"/><path d="M529.0 122.0L472.5 122.0" stroke="#a67a7a" stroke-width="2.02"/><path d="M482.9 476.0L483.5 391.0" stroke="#dcaaaa" stroke-width="1.99"/><path d="M589.3 455.4L581.8 377.3" stroke="#dcaaaa" stroke-width="1.94"/><path d="M549.0 417.0L545.1 350.5" stroke="#dcaaaa" stroke-width="1.84"/><path d="M482.9 476.0L455.9 361.2" stroke="#dcaaaa" stroke-width="1.95"/><path d="M482.9 476.0L581.8 377.3" stroke="#dcaaaa" stroke-width="1.97"/><path d="M589.3 455.4L483.5 391.0" stroke="#dcaaaa" stroke-width="1.96"/><path d="M589.3 455.4L545.1 350.5" stroke="#dcaaaa" stroke-width="1.90"/><path d="M455.7 432.3L545.1 350.5" stroke="#dcaaaa" stroke-width="1.87"/><path d="M549.0 417.0L455.9 361.2" stroke="#dcaaaa" stroke-width="1.86"/><path d="M483.5 391.0L581.8 377.3" stroke="#dcaaaa" stroke-width="1.85"/><path d="M581.8 377.3L545.1 350.5" stroke="#dcaaaa" stroke-width="1.79"/><path d="M545.1 350.5L455.9 361.2" stroke="#dcaaaa" stroke-width="1.76"/><path d="M483.5 391.0L485.0 301.5" stroke="#dcaaaa" stroke-width="1.74"/><path d="M581.8 377.3L570.8 292.8" stroke="#dcaaaa" stroke-width="1.70"/><path d="M545.1 350.5L539.8 279.7" stroke="#dcaaaa" stroke-width="1.64"/><path d="M483.5 391.0L461.4 286.2" stroke="#dcaaaa" stroke-width="1.71"/><path d="M483.5 391.0L570.8 292.8" stroke="#dcaaaa" stroke-width="1.72"/><path d="M581.8 377.3L485.0 301.5" stroke="#dcaaaa" stroke-width="1.72"/><path d="M581.8 377.3L539.8 279.7" stroke="#dcaaaa" stroke-width="1.68"/><path d="M455.9 361.2L539.8 279.7" stroke="#dcaaaa" stroke-width="1.66"/><path d="M545.1 350.5L461.4 286.2" stroke="#dcaaaa" stroke-width="1.65"/><path d="M485.0 301.5L570.8 292.8" stroke="#dcaaaa" stroke-width="1.59"/><path d="M539.8 279.7L461.4 286.2" stroke="#dcaaaa" stroke-width="1.55"/><path d="M485.0 301.5L487.2 210.8" stroke="#dcaaaa" stroke-width="1.47"/><path d="M570.8 292.8L560.2 207.3" stroke="#dcaaaa" stroke-width="1.45"/><path d="M539.8 279.7L534.5 203.0" stroke="#dcaaaa" stroke-width="1.43"/><path d="M485.0 301.5L466.6 206.5" stroke="#dcaaaa" stroke-width="1.47"/><path d="M485.0 301.5L560.2 207.3" stroke="#dcaaaa" stroke-width="1.47"/><path d="M570.8 292.8L487.2 210.8" stroke="#dcaaaa" stroke-width="1.46"/><path d="M570.8 292.8L534.5 203.0" stroke="#dcaaaa" stroke-width="1.45"/><path d="M461.4 286.2L534.5 203.0" stroke="#dcaaaa" stroke-width="1.44"/><path d="M487.2 210.8L560.2 207.3" stroke="#dcaaaa" stroke-width="1.33"/><path d="M534.5 203.0L466.6 206.5" stroke="#dcaaaa" stroke-width="1.32"/><path d="M487.2 210.8L489.0 116.0" stroke="#dcaaaa" stroke-width="1.20"/><path d="M560.2 207.3L549.5 118.0" stroke="#dcaaaa" stroke-width="1.20"/><path d="M534.5 203.0L529.0 122.0" stroke="#dcaaaa" stroke-width="1.20"/><path d="M487.2 210.8L472.5 122.0" stroke="#dcaaaa" stroke-width="1.21"/><path d="M487.2 210.8L549.5 118.0" stroke="#dcaaaa" stroke-width="1.20"/><path d="M560.2 207.3L489.0 116.0" stroke="#dcaaaa" stroke-width="1.19"/><path d="M560.2 207.3L529.0 122.0" stroke="#dcaaaa" stroke-width="1.20"/><path d="M466.6 206.5L529.0 122.0" stroke="#dcaaaa" stroke-width="1.20"/><path d="M489.0 116.0L549.5 118.0" stroke="#dcaaaa" stroke-width="1.15"/><path d="M529.0 122.0L472.5 122.0" stroke="#dcaaaa" stroke-width="1.15"/></g>
</svg>
</div>
<svg style="left:743px;top:179px" width="132" height="102"><defs><clipPath id="tc"><path d="M7.5 0.5H120.5Q127.5 0.5 127.5 7.5V76.5Q127.5 83.5 120.5 83.5H116.5V99L101.5 83.5H7.5Q0.5 83.5 0.5 76.5V7.5Q0.5 0.5 7.5 0.5Z"/></clipPath></defs><path d="M7.5 0.5H120.5Q127.5 0.5 127.5 7.5V76.5Q127.5 83.5 120.5 83.5H116.5V99L101.5 83.5H7.5Q0.5 83.5 0.5 76.5V7.5Q0.5 0.5 7.5 0.5Z" fill="#ffffe4"/><path d="M7.5 0.5H120.5Q127.5 0.5 127.5 7.5V76.5Q127.5 83.5 120.5 83.5H116.5V99L101.5 83.5H7.5Q0.5 83.5 0.5 76.5V7.5Q0.5 0.5 7.5 0.5Z" fill="none" stroke="#c8c8c0" stroke-width="5" clip-path="url(#tc)"/><path d="M7.5 0.5H120.5Q127.5 0.5 127.5 7.5V76.5Q127.5 83.5 120.5 83.5H116.5V99L101.5 83.5H7.5Q0.5 83.5 0.5 76.5V7.5Q0.5 0.5 7.5 0.5Z" fill="none" stroke="#111" stroke-width="1"/>
<path d="M19.5 10.5C15 10.5 12.5 13 12.5 16S15 21.5 18.5 21.5L21 24.5V21.3C24.5 20.5 26.5 18.5 26.5 16S24 10.5 19.5 10.5Z" fill="#fff" stroke="#000" stroke-width="1.1"/><path d="M17.5 14h3v5h1.3v1.4h-5.3v-1.4h1.2v-3.6h-1.2z" fill="#0000c8"/><rect x="18.6" y="11.6" width="2" height="1.8" fill="#0000c8"/></svg>
<div class="a t" style="left:770px;top:189px;font-size:11px;line-height:12.9px;transform:scaleX(.975);transform-origin:0 0;color:#111">Member: M4-4<br>Type: L2X2X1/4<br>Area: 0.94400 in^2<br>Weight: 16.2 lb<br>Material: Steel</div>
<div class="a" style="left:306px;top:114px;width:1px;height:582px;background:#a0a0a0"></div>
<div class="a" style="left:307px;top:114px;width:1px;height:582px;background:#6a6a6a"></div>
<div class="a" style="left:306px;top:114px;width:1060px;height:1px;background:#6a6a6a"></div>
<div class="a" style="left:1348px;top:116px;width:16px;height:561px;background:#eaeaea"></div>
<div class="a" style="left:1348px;top:174px;width:15px;height:473px;border:1px solid #a0a0a0;border-radius:2px;background:linear-gradient(90deg,#f4f4f4,#e6e6e6 50%,#d0d0d0)"></div>
<div class="a" style="left:308px;top:678px;width:1040px;height:17px;background:#eaeaea;border-top:1px solid #f4f4f4"></div>
<div class="a" style="left:342px;top:679px;width:951px;height:15px;border:1px solid #a0a0a0;border-radius:2px;background:linear-gradient(180deg,#f4f4f4,#e6e6e6 50%,#d0d0d0)"></div>
<div class="a" style="left:1348px;top:678px;width:16px;height:17px;background:#f0f0f0"></div>
<svg style="left:1351px;top:120px" width="10" height="6"><path d="M0.5 5.5L5 1l4.5 4.5z" fill="#404040"/></svg>
<svg style="left:1351px;top:665px" width="10" height="6"><path d="M0.5 0.5L5 5l4.5-4.5z" fill="#404040"/></svg>
<svg style="left:313px;top:682px" width="6" height="10"><path d="M5.5 0.5L1 5l4.5 4.5z" fill="#404040"/></svg>
<svg style="left:1337px;top:682px" width="6" height="10"><path d="M0.5 0.5L5 5l-4.5 4.5z" fill="#404040"/></svg>
<svg style="left:1351px;top:404px" width="9" height="10"><path d="M1 1.5h6M1 4.5h6M1 7.5h6" stroke="#404040" stroke-width="1.2"/></svg>
<svg style="left:812px;top:682px" width="10" height="9"><path d="M1.5 1v7M4.5 1v7M7.5 1v7" stroke="#404040" stroke-width="1.2"/></svg>
<div class="a" style="left:0px;top:700px;width:1366px;height:1px;background:#a0a0a0"></div>
<div class="a" style="left:0px;top:701px;width:1366px;height:1px;background:#6a6a6a"></div>
<div class="a" style="left:0px;top:702px;width:1366px;height:1px;background:#fff"></div>
<div class="a" style="left:3px;top:706px;width:14px;height:16px;border:1px solid #a0a0a0;border-right-color:#fff;border-bottom-color:#fff"></div>
<div class="a t" style="left:5px;top:707px;font-size:12px">M</div>
<div class="a t" style="left:19px;top:707px;font-size:12px;transform:scaleX(.92);transform-origin:0 0">Steel Tower</div>
<div class="a" style="left:699px;top:704px;width:265px;height:22px;border:1px solid #a0a0a0;border-right-color:#fff;border-bottom-color:#fff;background:#fff"><div style="position:absolute;left:0;top:0;right:0;bottom:0;border-left:1px solid #505050;border-top:1px solid #505050;border-right:1px solid #e0e0e0;border-bottom:1px solid #e0e0e0"></div></div>
<div class="a t" style="left:703px;top:709px;transform:scaleX(.95);transform-origin:0 0">Water Tank</div>
<div class="a" style="left:945px;top:706px;width:17px;height:18px;border:1px solid #f0f0f0;border-right-color:#404040;border-bottom-color:#404040;background:#f0f0f0;box-shadow:inset 1px 1px 0 #fff,inset -1px -1px 0 #a0a0a0"></div>
<svg style="left:949px;top:713px" width="9" height="5"><path d="M0 0h9L4.5 5z" fill="#000"/></svg>
<div class="a" style="left:968px;top:704px;width:111px;height:22px;border:1px solid #a0a0a0;border-right-color:#fff;border-bottom-color:#fff;background:#fff"><div style="position:absolute;left:0;top:0;right:0;bottom:0;border-left:1px solid #505050;border-top:1px solid #505050;border-right:1px solid #e0e0e0;border-bottom:1px solid #e0e0e0"></div></div>
<div class="a t" style="left:972px;top:709px;transform:scaleX(.95);transform-origin:0 0">Picture View</div>
<div class="a" style="left:1060px;top:706px;width:17px;height:18px;border:1px solid #f0f0f0;border-right-color:#404040;border-bottom-color:#404040;background:#f0f0f0;box-shadow:inset 1px 1px 0 #fff,inset -1px -1px 0 #a0a0a0"></div>
<svg style="left:1064px;top:713px" width="9" height="5"><path d="M0 0h9L4.5 5z" fill="#000"/></svg>
<div class="a" style="left:1083px;top:704px;width:97px;height:22px;border:1px solid #a0a0a0;border-right-color:#fff;border-bottom-color:#fff;background:#fff"><div style="position:absolute;left:0;top:0;right:0;bottom:0;border-left:1px solid #505050;border-top:1px solid #505050;border-right:1px solid #e0e0e0;border-bottom:1px solid #e0e0e0"></div></div>
<div class="a" style="left:1161px;top:706px;width:17px;height:18px;border:1px solid #f0f0f0;border-right-color:#404040;border-bottom-color:#404040;background:#f0f0f0;box-shadow:inset 1px 1px 0 #fff,inset -1px -1px 0 #a0a0a0"></div>
<svg style="left:1165px;top:713px" width="9" height="5"><path d="M0 0h9L4.5 5z" fill="#000"/></svg>
<div class="a t" style="left:1090px;top:708px;font-weight:bold;font-size:13px">?</div>
<div class="a t" style="left:1106px;top:709px;transform:scaleX(.95);transform-origin:0 0">Other</div>
<div class="a" style="left:1183px;top:706px;width:180px;height:19px;border:1px solid #a0a0a0;border-right-color:#fff;border-bottom-color:#fff"></div>
<div class="a" style="left:0px;top:726px;width:1366px;height:1px;background:#a8a8a8"></div>
<div class="a" style="left:0px;top:727px;width:1366px;height:1px;background:#fafafa"></div>
<div class="a" style="left:176px;top:727px;width:74px;height:1px;background:#000"></div>
</body></html>
